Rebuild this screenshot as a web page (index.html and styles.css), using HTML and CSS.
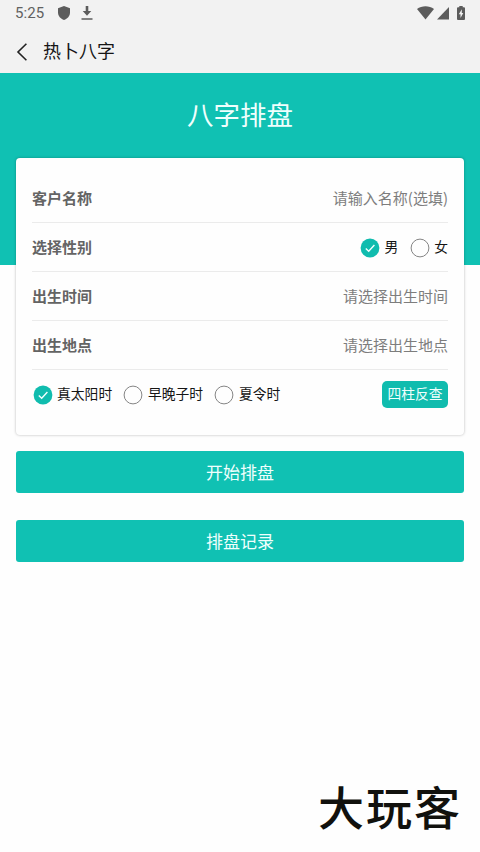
FILE: index.html
```html
<!DOCTYPE html>
<html lang="zh-CN">
<head>
<meta charset="utf-8">
<title>热卜八字</title>
<link rel="stylesheet" href="styles.css">
</head>
<body>
<header class="top">
  <div class="status">
    <span class="clock">5:25</span>
    <svg class="shield" width="12" height="14" viewBox="0 0 12 14"><path d="M6 0 12 2.2V6.5C12 10 9.4 12.900 6 14 2.600 12.900 0 10 0 6.500V2.200Z"/></svg>
    <svg class="download" width="12" height="14" viewBox="0 0 12 14"><path d="M4.700 0H7.300V5H10.300L6 9.800 1.700 5H4.700ZM.5 12.200H11.500V13.700H.5Z"/></svg>
    <div class="signals">
      <svg width="17" height="14" viewBox="0 0 17 14"><path d="M0 3C4.800-.6 12.200-.6 17 3L8.500 13.500Z"/></svg>
      <svg width="12" height="13" viewBox="0 0 12 13"><path d="M12 0V12.500H0Z"/></svg>
      <svg class="battery" width="8" height="14" viewBox="0 0 8 14"><path d="M2.300 0H5.700V1.300H7Q8 1.300 8 2.300V13Q8 14 7 14H1Q0 14 0 13V2.300Q0 1.300 1 1.300H2.300Z"/><path class="bolt" d="M4.800 3.200 1.800 8.300H3.500V12L6.300 7H4.800Z"/></svg>
    </div>
  </div>
  <nav class="nav">
    <svg class="back" width="12" height="20" viewBox="0 0 12 20"><path d="M10.400 1.800 2 10 10.400 18.200"/></svg>
    <span>热卜八字</span>
  </nav>
</header>
<section class="hero"><h1>八字排盘</h1></section>
<main class="content">
  <form class="card">
    <div class="row"><span class="label">客户名称</span><span class="hint">请输入名称(选填)</span></div>
    <div class="row">
      <span class="label">选择性别</span>
      <div class="choices gender">
        <span class="choice"><svg class="mark on" viewBox="0 0 20 20"><circle cx="10" cy="10" r="9.400"/><path d="M5.800 10.400 8.700 13.200 14.400 7.100"/></svg>男</span>
        <span class="choice"><svg class="mark" viewBox="0 0 20 20"><circle cx="10" cy="10" r="8.900"/></svg>女</span>
      </div>
    </div>
    <div class="row"><span class="label">出生时间</span><span class="hint">请选择出生时间</span></div>
    <div class="row"><span class="label">出生地点</span><span class="hint">请选择出生地点</span></div>
    <div class="row last">
      <div class="choices timing">
        <span class="choice"><svg class="mark on" viewBox="0 0 20 20"><circle cx="10" cy="10" r="9.400"/><path d="M5.800 10.400 8.700 13.200 14.400 7.100"/></svg>真太阳时</span>
        <span class="choice"><svg class="mark" viewBox="0 0 20 20"><circle cx="10" cy="10" r="8.900"/></svg>早晚子时</span>
        <span class="choice"><svg class="mark" viewBox="0 0 20 20"><circle cx="10" cy="10" r="8.900"/></svg>夏令时</span>
      </div>
      <span class="lookup">四柱反查</span>
    </div>
  </form>
  <div class="button">开始排盘</div>
  <div class="button">排盘记录</div>
</main>
<footer class="brand">大玩客</footer>
</body>
</html>
```
FILE: styles.css
```css
* { box-sizing: border-box; }
body {
  margin: 0;
  height: 852px;
  display: flex;
  flex-direction: column;
  overflow: hidden;
  background: #fefefe;
  color: #151515;
  font-family: "Noto Sans CJK SC", sans-serif;
}
svg { display: block; flex: none; }
.top { height: 73px; background: #f2f2f2; }
.status {
  height: 26px;
  padding: 0 15px;
  display: flex;
  align-items: center;
  color: #616161;
  fill: #5c5c5c;
}
.clock { width: 43px; padding-top: 1px; font: 15px/27px Roboto, sans-serif; letter-spacing: .1px; }
.download { margin-left: 11px; }
.signals { margin-left: auto; display: flex; align-items: center; gap: 3px; }
.battery { margin-left: 5px; }
.bolt { fill: #f2f2f2; }
.nav {
  height: 47px;
  padding: 2px 0 0 16px;
  display: flex;
  align-items: center;
  gap: 15px;
  font-size: 18px;
  line-height: 45px;
}
.back { fill: none; stroke: #222; stroke-width: 1.6; margin-top: 2px; }
.hero { height: 192px; background: #10c1b3; }
.hero h1 {
  margin: 0;
  padding-top: 21px;
  color: #effffd;
  font-size: 26.500px;
  font-weight: 400;
  line-height: 40px;
  text-align: center;
}
.content { margin-top: -107px; padding: 0 16px; }
.card {
  height: 277px;
  padding: 16px 16px 0;
  margin-bottom: 16px;
  background: #fefefe;
  border-radius: 4px;
  box-shadow: 0 0 3px rgba(0, 0, 0, .28);
}
.row {
  height: 49px;
  display: flex;
  align-items: center;
  justify-content: space-between;
  border-bottom: 1px solid #ebebeb;
  line-height: 22px;
}
.label { padding-bottom: 1px; color: #646464; font-size: 15px; font-weight: 700; }
.hint { padding-bottom: 1px; color: #7d7d7d; font-size: 15px; }
.last { border-color: transparent; }
.choices { display: flex; gap: 10.800px; font-size: 13.800px; }
.gender { gap: 11.500px; padding-bottom: 2px; }
.timing { padding-bottom: 2px; }
.choice { display: flex; align-items: center; gap: 4.500px; }
.mark { width: 20px; height: 20px; margin-top: 4px; fill: none; stroke: #858585; stroke-width: 1; }
.timing .mark { margin-left: .5px; }
.on circle { fill: #10bcae; stroke: none; }
.on path { stroke: #f3ffff; stroke-width: 1.4; }
.lookup {
  width: 66px;
  height: 27px;
  border-radius: 5px;
  background: #10bcae;
  color: #effffd;
  font-size: 13.800px;
  line-height: 25px;
  text-align: center;
}
.button {
  height: 42px;
  margin-bottom: 27px;
  border-radius: 3px;
  background: #10c1b3;
  color: #effffd;
  font-size: 17px;
  line-height: 42px;
  text-align: center;
}
.brand {
  margin: auto 18px 21px auto;
  color: #11110d;
  font-size: 46px;
  font-weight: 500;
  line-height: 52px;
  letter-spacing: 2px;
}
```
